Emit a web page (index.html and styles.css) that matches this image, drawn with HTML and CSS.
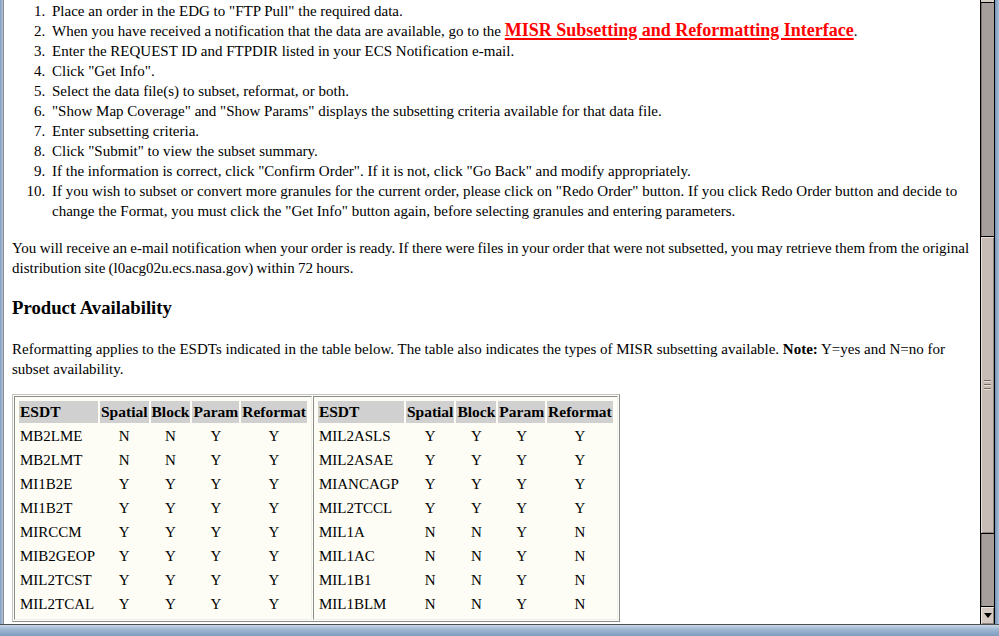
FILE: index.html
```html
<!DOCTYPE html>
<html>
<head>
<meta charset="utf-8">
<title>MISR Subsetting</title>
<link rel="stylesheet" href="styles.css">
</head>
<body>
<div class="window">
  <div class="frame-left"></div>
  <div class="viewport">
    <div class="page">
      <ol class="steps">
        <li>Place an order in the EDG to "FTP Pull" the required data.</li>
        <li>When you have received a notification that the data are available, go to the <a class="misr-link" href="#">MISR Subsetting and Reformatting Interface</a>.</li>
        <li>Enter the REQUEST ID and FTPDIR listed in your ECS Notification e-mail.</li>
        <li>Click "Get Info".</li>
        <li>Select the data file(s) to subset, reformat, or both.</li>
        <li>"Show Map Coverage" and "Show Params" displays the subsetting criteria available for that data file.</li>
        <li>Enter subsetting criteria.</li>
        <li>Click "Submit" to view the subset summary.</li>
        <li>If the information is correct, click "Confirm Order". If it is not, click "Go Back" and modify appropriately.</li>
        <li>If you wish to subset or convert more granules for the current order, please click on "Redo Order" button. If you click Redo Order button and decide to change the Format, you must click the "Get Info" button again, before selecting granules and entering parameters.</li>
      </ol>
      <p class="text notice">You will receive an e-mail notification when your order is ready. If there were files in your order that were not subsetted, you may retrieve them from the original distribution site (l0acg02u.ecs.nasa.gov) within 72 hours.</p>
      <h3 class="section-title">Product Availability</h3>
      <p class="text table-intro">Reformatting applies to the ESDTs indicated in the table below. The table also indicates the types of MISR subsetting available. <b>Note:</b> Y=yes and N=no for subset availability.</p>
      <table class="outer">
        <tr>
          <td class="outer-cell">
            <table class="esdt esdt-left">
              <tr><th class="name">ESDT</th><th>Spatial</th><th>Block</th><th>Param</th><th>Reformat</th></tr>
              <tr><td class="name">MB2LME</td><td>N</td><td>N</td><td>Y</td><td>Y</td></tr>
              <tr><td class="name">MB2LMT</td><td>N</td><td>N</td><td>Y</td><td>Y</td></tr>
              <tr><td class="name">MI1B2E</td><td>Y</td><td>Y</td><td>Y</td><td>Y</td></tr>
              <tr><td class="name">MI1B2T</td><td>Y</td><td>Y</td><td>Y</td><td>Y</td></tr>
              <tr><td class="name">MIRCCM</td><td>Y</td><td>Y</td><td>Y</td><td>Y</td></tr>
              <tr><td class="name">MIB2GEOP</td><td>Y</td><td>Y</td><td>Y</td><td>Y</td></tr>
              <tr><td class="name">MIL2TCST</td><td>Y</td><td>Y</td><td>Y</td><td>Y</td></tr>
              <tr><td class="name">MIL2TCAL</td><td>Y</td><td>Y</td><td>Y</td><td>Y</td></tr>
            </table>
          </td>
          <td class="outer-cell">
            <table class="esdt esdt-right">
              <tr><th class="name">ESDT</th><th>Spatial</th><th>Block</th><th>Param</th><th>Reformat</th></tr>
              <tr><td class="name">MIL2ASLS</td><td>Y</td><td>Y</td><td>Y</td><td>Y</td></tr>
              <tr><td class="name">MIL2ASAE</td><td>Y</td><td>Y</td><td>Y</td><td>Y</td></tr>
              <tr><td class="name">MIANCAGP</td><td>Y</td><td>Y</td><td>Y</td><td>Y</td></tr>
              <tr><td class="name">MIL2TCCL</td><td>Y</td><td>Y</td><td>Y</td><td>Y</td></tr>
              <tr><td class="name">MIL1A</td><td>N</td><td>N</td><td>Y</td><td>N</td></tr>
              <tr><td class="name">MIL1AC</td><td>N</td><td>N</td><td>Y</td><td>N</td></tr>
              <tr><td class="name">MIL1B1</td><td>N</td><td>N</td><td>Y</td><td>N</td></tr>
              <tr><td class="name">MIL1BLM</td><td>N</td><td>N</td><td>Y</td><td>N</td></tr>
            </table>
          </td>
        </tr>
      </table>
    </div>
  </div>
  <div class="scrollbar">
    <div class="sb-up"></div>
    <div class="sb-track sb-track-top"></div>
    <div class="sb-thumb"><span class="grip"></span></div>
    <div class="sb-track sb-track-bottom"></div>
    <div class="sb-down"><span class="arrow"></span></div>
  </div>
  <div class="frame-right"></div>
</div>
<div class="frame-bottom"></div>
</body>
</html>
```

FILE: styles.css
```css
html, body {
  margin: 0;
  padding: 0;
  width: 999px;
  height: 636px;
  overflow: hidden;
  background: #ffffff;
  font-family: "Liberation Serif", "Times New Roman", serif;
  font-size: 15px;
  color: #000000;
}

.window {
  display: flex;
  height: 624px;
}

.frame-left {
  width: 3px;
  background: linear-gradient(to right, #7f9cc0, #b4c7dc);
  border-right: 1px solid #8a8a8a;
}

.viewport {
  flex: 1;
  overflow: hidden;
  background: #ffffff;
}

.page {
  padding: 0 8px;
}

.steps {
  margin: 1px 0 17px 0;
  padding-left: 40px;
  line-height: 20px;
}

.steps li::marker {
  content: counter(list-item) ".\00a0\2009";
}

.misr-link {
  color: #ff0000;
  font-weight: bold;
  font-size: 18px;
  line-height: 16px;
  text-decoration: underline;
  text-decoration-thickness: 2px;
  text-underline-offset: 2px;
}

.text {
  margin: 0 0 16px 0;
  line-height: 20px;
}

.notice {
  word-spacing: -0.45px;
}

.section-title {
  margin: 19px 0 20px 0;
  font-size: 18.72px;
  line-height: 22px;
  font-weight: bold;
}

.table-intro {
  margin-bottom: 15px;
}

.outer {
  border-collapse: separate;
  border-spacing: 1px;
  border: 1px solid;
  border-color: #c4c4c4 #8c8c8c #8c8c8c #c4c4c4;
  background: #fdfdf6;
}

.outer-cell {
  padding: 2px;
  border: 1px solid;
  border-color: #8c8c8c #f0f0ea #f0f0ea #8c8c8c;
  vertical-align: top;
}

.esdt {
  border-collapse: separate;
  border-spacing: 2px;
  font-size: 15px;
}

.esdt th,
.esdt td {
  padding: 1px;
  line-height: 20px;
  text-align: center;
  white-space: nowrap;
}

.esdt th {
  background: #d0d0d0;
  font-weight: bold;
  font-size: 15.5px;
}

.esdt .name {
  text-align: left;
}

.esdt-left th.name {
  width: 77px;
}

.esdt-right th.name {
  width: 84px;
}

.scrollbar {
  width: 13px;
  border-left: 1px solid #000000;
  border-right: 1px solid #000000;
  display: flex;
  flex-direction: column;
  background: #a69e9b;
}

.sb-up {
  height: 2px;
  background: #d8cec6;
  border-bottom: 1px solid #000000;
}

.sb-track {
  background: #a69e9b;
}

.sb-track-top {
  height: 233px;
  border-left: 1px solid #7a7270;
}

.sb-thumb {
  height: 296px;
  border-top: 1px solid #000000;
  border-bottom: 1px solid #000000;
  background: #c7bdb6;
  box-shadow: inset 1px 1px 0 #e6ddd6, inset -1px -1px 0 #8e8480;
  display: flex;
  align-items: center;
  justify-content: center;
}

.grip {
  width: 7px;
  height: 10px;
  background: repeating-linear-gradient(to bottom, #7a6a60 0, #7a6a60 1px, #e8e0d8 1px, #e8e0d8 2px, transparent 2px, transparent 4px);
}

.sb-track-bottom {
  flex: 1;
  border-left: 1px solid #7a7270;
}

.sb-down {
  height: 17px;
  border-top: 1px solid #000000;
  background: #d4cac2;
  box-shadow: inset 1px 1px 0 #ece4de, inset -1px -1px 0 #8e8480;
  display: flex;
  align-items: center;
  justify-content: center;
}

.arrow {
  width: 0;
  height: 0;
  border-left: 4px solid transparent;
  border-right: 4px solid transparent;
  border-top: 5px solid #000000;
}

.frame-right {
  width: 4px;
  background: linear-gradient(to right, #7393b9, #a9c0d9);
}

.frame-bottom {
  height: 11px;
  border-top: 1px solid #505050;
  background: linear-gradient(to bottom, #c9d8e8, #9fb7d2 40%, #7e9cc0);
}
```
